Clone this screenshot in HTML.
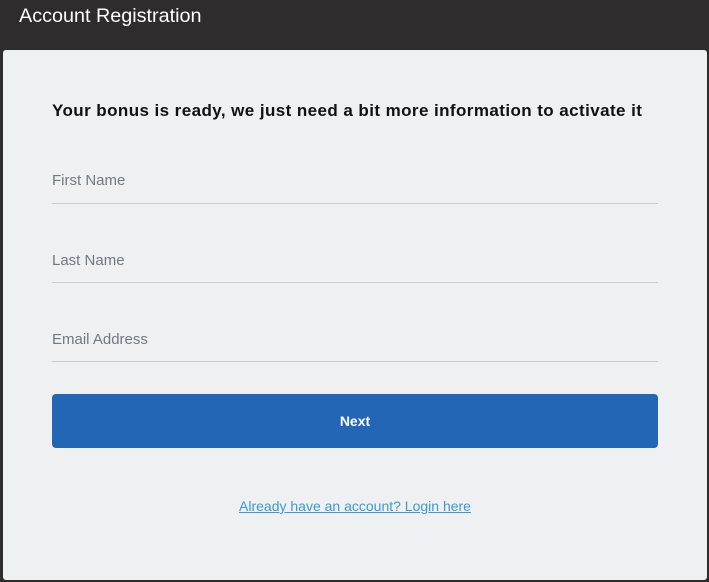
<!DOCTYPE html>
<html><head><style>
html,body{margin:0;padding:0;width:709px;height:582px;background:#2e2c2d;overflow:hidden;font-family:"Liberation Sans",sans-serif}
.title{position:absolute;left:19px;top:5px;color:#fff;font-size:19.8px;}
.card{position:absolute;left:3px;top:50px;width:704px;height:530px;background:#eff0f2;border-radius:3px}
h1{position:absolute;left:49px;top:51px;margin:0;font-size:17px;font-weight:bold;color:#111;white-space:nowrap;letter-spacing:0.42px}
.f{position:absolute;left:49px;width:606px;border-bottom:1px solid #c8cacc;color:#6f7a80;font-size:15px}
.f span{position:absolute;left:0;top:2px}
.btn{position:absolute;left:49px;top:344px;width:606px;height:54px;background:#2266b5;border-radius:4px;color:#fff;font-weight:bold;font-size:14px;text-align:center;line-height:54px}
.lnk{position:absolute;left:0;width:704px;top:448px;text-align:center;color:#3a9ad6;font-size:14px;text-decoration:underline}
</style></head><body>
<div class="title">Account Registration</div>
<div class="card">
<h1>Your bonus is ready, we just need a bit more information to activate it</h1>
<div class="f" style="top:120px;height:33px"><span>First Name</span></div>
<div class="f" style="top:200px;height:32px"><span>Last Name</span></div>
<div class="f" style="top:279px;height:32px"><span>Email Address</span></div>
<div class="btn">Next</div>
<div class="lnk">Already have an account? Login here</div>
</div>
</body></html>
